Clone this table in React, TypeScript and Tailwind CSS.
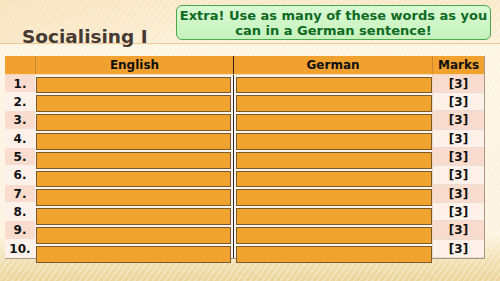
const rows = [
  { n: '1.', h: 'h-[18px]', bg: 'bg-[#f9dccd]', box: 'h-[16px]' },
  { n: '2.', h: 'h-[18px]', bg: 'bg-[#fdf1e9]', box: 'h-[17px]' },
  { n: '3.', h: 'h-[19px]', bg: 'bg-[#f9dccd]', box: 'h-[17px]' },
  { n: '4.', h: 'h-[18px]', bg: 'bg-[#fdf1e9]', box: 'h-[17px]' },
  { n: '5.', h: 'h-[18px]', bg: 'bg-[#f9dccd]', box: 'h-[17px]' },
  { n: '6.', h: 'h-[19px]', bg: 'bg-[#fdf1e9]', box: 'h-[16px]' },
  { n: '7.', h: 'h-[18px]', bg: 'bg-[#f9dccd]', box: 'h-[17px]' },
  { n: '8.', h: 'h-[18px]', bg: 'bg-[#fdf1e9]', box: 'h-[17px]' },
  { n: '9.', h: 'h-[19px]', bg: 'bg-[#f9dccd]', box: 'h-[17px]' },
  { n: '10.', h: 'h-[18px]', bg: 'bg-[#fdf1e9]', box: 'h-[17px]' },
]

function AnswerBoxes({ side }: { side: 'en' | 'de' }) {
  // orange shapes laid over the table cells, they drift a little from the rows
  return (
    <div
      className={
        side === 'en'
          ? 'absolute top-[21px] left-[31px] w-[195px] flex flex-col gap-[2px]'
          : 'absolute top-[21px] left-[231px] w-[196px] flex flex-col gap-[2px]'
      }
    >
      {rows.map((r) => (
        <div key={r.n} className={`${r.box} w-full bg-[#f0a32f] border border-[#7d5a2c]`} />
      ))}
    </div>
  )
}

export default function App() {
  return (
    <div className="relative w-[500px] h-[281px] overflow-hidden font-['DejaVu_Sans',sans-serif] bg-[repeating-linear-gradient(125deg,rgba(255,255,255,0.28)_0px,rgba(255,255,255,0.28)_2px,transparent_2px,transparent_5px),linear-gradient(180deg,#fae8c6_0px,#fcefd5_43px,#fdf4e2_46px,#fdf3df_235px,#f1dfaf_262px,#e9d49b_281px)]">
      <div className="flex items-start h-[44px] border-b border-[#ecc995] bg-[linear-gradient(90deg,rgba(245,222,180,0.45)_0px,rgba(255,255,255,0)_200px)]">
        <h1 className="ml-[22px] mt-[28px] h-[18px] text-[18.5px] leading-[18px] font-bold text-[#463833] whitespace-nowrap">
          Socialising I
        </h1>
        <div className="ml-auto mr-[9px] mt-[5px] w-[315px] h-[35px] pt-[1px] rounded-[6px] border-[1.5px] border-[#4aa84a] bg-[linear-gradient(180deg,#d9f9d2,#c6f2be)] flex flex-col items-center justify-center text-[13px] leading-[15px] font-bold text-[#0d6a1f]">
          <span>Extra! Use as many of these words as you</span>
          <span>can in a German sentence!</span>
        </div>
      </div>

      <div className="relative ml-[5px] mt-[12px] w-[480px] border-r border-b border-[#a8987f]">
        <div className="flex h-[19px] bg-[#f0a12f] text-[12px] font-bold text-[#111] border-b border-[#f6d9b0]">
          <div className="w-[31px] border-r border-[#c98a2e]" />
          <div className="w-[198px] flex items-center justify-center border-r border-[#2f241c]">English</div>
          <div className="w-[199px] flex items-center justify-center border-r border-[#c98a2e]">German</div>
          <div className="w-[51px] flex items-center justify-center">Marks</div>
        </div>
        {rows.map((r) => (
          <div key={r.n} className={`flex ${r.h} text-[12px] font-bold text-[#111]`}>
            <div className={`w-[31px] ${r.bg} flex items-center justify-center border-r border-b border-[#fbf3ee]`}>
              {r.n}
            </div>
            <div className="w-[198px] bg-[#fbf5f1] border-r border-[#2f241c]" />
            <div className="w-[199px] bg-[#fbf5f1] border-r border-[#e8d8cc]" />
            <div className={`w-[51px] ${r.bg} flex items-center justify-center border-b border-[#e9ddd3]`}>
              [3]
            </div>
          </div>
        ))}
        <AnswerBoxes side="en" />
        <AnswerBoxes side="de" />
      </div>
    </div>
  )
}
